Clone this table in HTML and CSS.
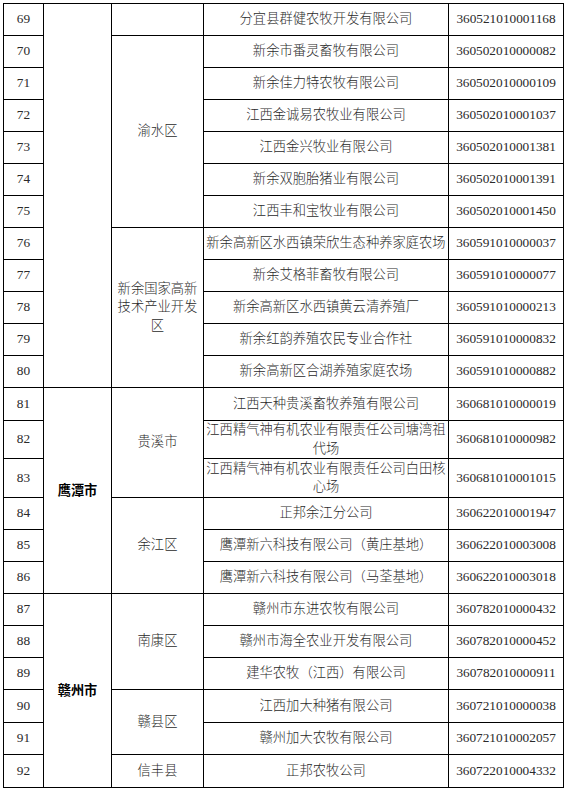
FILE: index.html
```html
<!DOCTYPE html>
<html lang="zh-CN">
<head>
<meta charset="utf-8">
<link rel="stylesheet" href="styles.css">
</head>
<body>
<table class="grid">
  <colgroup>
    <col class="c-no"><col class="c-city"><col class="c-dist"><col class="c-name"><col class="c-code">
  </colgroup>
  <tbody>
    <tr><td>69</td><td rowspan="12"></td><td></td><td>分宜县群健农牧开发有限公司</td><td>360521010001168</td></tr>
    <tr><td>70</td><td rowspan="6">渝水区</td><td>新余市番灵畜牧有限公司</td><td>360502010000082</td></tr>
    <tr><td>71</td><td>新余佳力特农牧有限公司</td><td>360502010000109</td></tr>
    <tr><td>72</td><td>江西金诚易农牧业有限公司</td><td>360502010001037</td></tr>
    <tr><td>73</td><td>江西金兴牧业有限公司</td><td>360502010001381</td></tr>
    <tr><td>74</td><td>新余双胞胎猪业有限公司</td><td>360502010001391</td></tr>
    <tr><td>75</td><td>江西丰和宝牧业有限公司</td><td>360502010001450</td></tr>
    <tr><td>76</td><td rowspan="5">新余国家高新技术产业开发区</td><td>新余高新区水西镇荣欣生态种养家庭农场</td><td>360591010000037</td></tr>
    <tr><td>77</td><td>新余艾格菲畜牧有限公司</td><td>360591010000077</td></tr>
    <tr><td>78</td><td>新余高新区水西镇黄云清养殖厂</td><td>360591010000213</td></tr>
    <tr><td>79</td><td>新余红韵养殖农民专业合作社</td><td>360591010000832</td></tr>
    <tr><td>80</td><td>新余高新区合湖养殖家庭农场</td><td>360591010000882</td></tr>
    <tr class="r33"><td>81</td><td rowspan="6" class="city">鹰潭市</td><td rowspan="3">贵溪市</td><td>江西天种贵溪畜牧养殖有限公司</td><td>360681010000019</td></tr>
    <tr class="tall"><td>82</td><td>江西精气神有机农业有限责任公司塘湾祖代场</td><td>360681010000982</td></tr>
    <tr class="tall2"><td>83</td><td>江西精气神有机农业有限责任公司白田核心场</td><td>360681010001015</td></tr>
    <tr><td>84</td><td rowspan="3">余江区</td><td>正邦余江分公司</td><td>360622010001947</td></tr>
    <tr><td>85</td><td>鹰潭新六科技有限公司（黄庄基地）</td><td>360622010003008</td></tr>
    <tr><td>86</td><td>鹰潭新六科技有限公司（马荃基地）</td><td>360622010003018</td></tr>
    <tr><td>87</td><td rowspan="6" class="city">赣州市</td><td rowspan="3">南康区</td><td>赣州市东进农牧有限公司</td><td>360782010000432</td></tr>
    <tr><td>88</td><td>赣州市海全农业开发有限公司</td><td>360782010000452</td></tr>
    <tr><td>89</td><td>建华农牧（江西）有限公司</td><td>360782010000911</td></tr>
    <tr class="r33"><td>90</td><td rowspan="2">赣县区</td><td>江西加大种猪有限公司</td><td>360721010000038</td></tr>
    <tr><td>91</td><td>赣州加大农牧有限公司</td><td>360721010002057</td></tr>
    <tr class="r33"><td>92</td><td>信丰县</td><td>正邦农牧公司</td><td>360722010004332</td></tr>
  </tbody>
</table>
</body>
</html>
```

FILE: styles.css
```css
html, body {
  margin: 0;
  padding: 0;
  background: #ffffff;
}

.grid {
  border-collapse: collapse;
  table-layout: fixed;
  width: 560px;
  margin: 3px 0 0 3px;
  font-family: "Liberation Serif", "Noto Sans CJK SC", serif;
  font-size: 13.3px;
  font-weight: 300;
  line-height: 18.5px;
  color: #2a2a2a;
}

.c-no { width: 40px; }
.c-city { width: 68px; }
.c-dist { width: 92px; }
.c-name { width: 245px; }
.c-code { width: 115px; }

.grid tr { height: 32px; }
.grid tr.r33 { height: 33px; }
.grid tr.tall { height: 38px; }
.grid tr.tall2 { height: 39px; }

.grid td {
  border: 1px solid #000;
  padding: 0 2px;
  text-align: center;
  vertical-align: middle;
}

.grid td.city {
  font-family: "Noto Sans CJK SC", sans-serif;
  font-weight: 700;
  color: #000;
  font-size: 13.2px;
}
```
